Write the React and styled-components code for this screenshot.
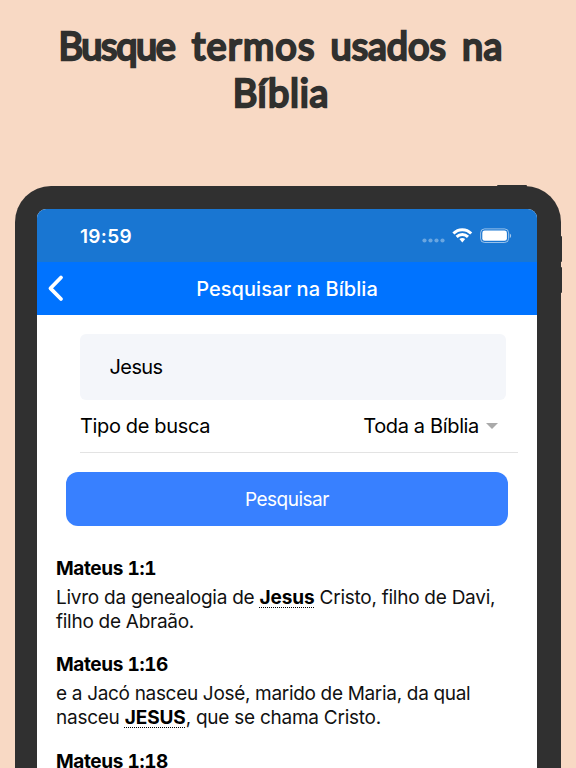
import React, {useState} from "react";
import styled, {createGlobalStyle} from "styled-components";

const GlobalStyle = createGlobalStyle`
* {
    box-sizing: border-box;
}

body {
    margin: 0;
    background: #f8d9c4;
    font-family: Inter, "Liberation Sans", sans-serif;
}
`;

const Page = styled.main`
width: 576px;
height: 768px;
overflow: hidden;
background: #f8d9c4;
`;

const Headline = styled.h1`
height: 186px;
margin: 0;
padding: 22px 15px 0 0;
font-family: Lato, sans-serif;
font-size: 38px;
font-weight: 400;
line-height: 47px;
color: #30302e;
-webkit-text-stroke: 2.4px #30302e;
`;

const HeadlineRow = styled.span`
display: flex;
justify-content: center;
gap: 16px;
`;

const Word = styled.span`
letter-spacing: ${(props) => props.$spacing}px;
margin-right: ${(props) => -props.$spacing}px;
`;

const Tablet = styled.div`
position: relative;
width: 546px;
height: 640px;
margin-left: 15px;
padding: 23px 24px 0 22px;
border-radius: 36px 36px 0 0;
background: #303030;
`;

const SideButton = styled.span`
position: absolute;
top: ${(props) => props.$top}px;
left: ${(props) => props.$left}px;
width: ${(props) => props.$width}px;
height: ${(props) => props.$height}px;
border-radius: 1px;
background: #303030;
`;

const Screen = styled.div`
height: 100%;
overflow: hidden;
border-radius: 9px 9px 0 0;
background: #fff;
`;

const StatusBar = styled.div`
display: flex;
align-items: center;
justify-content: space-between;
height: 53px;
padding: 1px 25px 0 43px;
background: #1976d2;
color: #fff;
`;

const Clock = styled.span`
font-size: 19px;
font-weight: 600;
letter-spacing: 0.3px;
`;

const NavBar = styled.header`
display: grid;
grid-template-columns: 40px 1fr 40px;
align-items: center;
height: 53px;
background: #0073ff;
color: #fff;
`;

const BackButton = styled.button`
display: flex;
padding: 0 0 2px 10px;
border: none;
background: none;
color: inherit;
cursor: pointer;
`;

const NavTitle = styled.h2`
margin: 0;
text-align: center;
font-size: 20px;
font-weight: 500;
letter-spacing: 0.06px;
`;

const SearchForm = styled.form`
padding-top: 19px;
`;

const SearchInput = styled.input`
display: block;
width: 426px;
height: 66px;
margin-left: 43px;
padding: 0 29.5px;
border: none;
border-radius: 6px;
outline: none;
background: #f4f6fa;
color: #000;
font-family: inherit;
font-size: 20px;
letter-spacing: -0.6px;
`;

const TypeRow = styled.div`
display: flex;
align-items: center;
justify-content: space-between;
height: 53px;
margin: 0 19px 0 43px;
padding-right: 20px;
border-bottom: 1px solid #e3e3e3;
font-size: 20px;
letter-spacing: -0.35px;
`;

const TypeValue = styled.span`
display: flex;
align-items: center;
gap: 7px;
`;

const Caret = styled.span`
border: 6px solid transparent;
border-top-color: #aaa;
border-bottom: none;
`;

const SubmitBtn = styled.button`
display: block;
width: 442.5px;
height: 54px;
margin: 19px 0 0 28.7px;
border: none;
border-radius: 12px;
background: #3880ff;
color: #fff;
font-family: inherit;
font-size: 19px;
letter-spacing: -0.5px;
cursor: pointer;
`;

const Results = styled.section`
padding: 30.5px 19px 0;
`;

const Verse = styled.article`
margin-bottom: 19.7px;
font-size: 19px;
line-height: 24px;
white-space: nowrap;
color: #111;
`;

const VerseRef = styled.h3`
margin: 0 0 5px;
font-size: 19px;
font-weight: 700;
font-variant-numeric: tabular-nums;
letter-spacing: -0.4px;
color: #000;
`;

const VerseLine = styled.div`
letter-spacing: ${(props) => props.$spacing}px;
`;

const Match = styled.b`
letter-spacing: -0.1px;
color: #000;
text-decoration: underline dotted 1px;
text-underline-offset: 3px;
text-decoration-skip-ink: none;
`;

function StatusIcons() {
    return(
        <svg width="90" height="18" viewBox="0 0 90 18" fill="#fff">
            <g opacity="0.35">
                <circle cx="2.5" cy="13.5" r="2.1" />
                <circle cx="8.5" cy="13.5" r="2.1" />
                <circle cx="14.5" cy="13.5" r="2.1" />
                <circle cx="20.5" cy="13.5" r="2.1" />
            </g>
            <g fill="none" stroke="#fff" strokeWidth="2.9">
                <path d="M31.4 6.5C36.3 1.4 44.3 1.4 49.2 6.5" />
                <path d="M34.6 9.9C37.8 6.7 42.8 6.7 46 9.9" />
            </g>
            <path d="M37.4 12.1C39.1 10.7 41.5 10.7 43.2 12.1L40.3 15.4Z" />
            <rect x="58.6" y="1.9" width="28" height="13.6" rx="4" fill="none" stroke="#fff" strokeOpacity="0.55" />
            <rect x="60.3" y="3.6" width="24.6" height="10.2" rx="2.4" />
            <path d="M87.8 6.4C89.6 7.2 89.6 10.2 87.8 11Z" opacity="0.6" />
        </svg>
    )
}

const headline = [
    [
        {text: "Busque", spacing: -1.4},
        {text: "termos", spacing: 1.2},
        {text: "usados", spacing: -0.1},
        {text: "na", spacing: 0.5},
    ],
    [{text: "Bíblia", spacing: 0.7}],
];

const results = [
    {
        reference: "Mateus 1:1",
        lines: [
            {spacing: -0.26, before: "Livro da genealogia de ", match: "Jesus", after: " Cristo, filho de Davi,"},
            {spacing: -0.27, before: "filho de Abraão."},
        ],
    },
    {
        reference: "Mateus 1:16",
        lines: [
            {spacing: -0.32, before: "e a Jacó nasceu José, marido de Maria, da qual"},
            {spacing: -0.25, before: "nasceu ", match: "JESUS", after: ", que se chama Cristo."},
        ],
    },
    {reference: "Mateus 1:18", lines: []},
];

export default function App() {

const [term, setTerm] = useState("Jesus");

    return(
        <Page>
            <GlobalStyle />
            <Headline>
                {headline.map((row) => (
                    <HeadlineRow key={row[0].text}>
                        {row.map((word) => (
                            <Word key={word.text} $spacing={word.spacing}>{word.text}</Word>
                        ))}
                    </HeadlineRow>
                ))}
            </Headline>
            <Tablet>
                <SideButton $top={-1} $left={482} $width={30} $height={3} />
                <SideButton $top={50} $left={544} $width={3} $height={26} />
                <SideButton $top={81} $left={544} $width={3} $height={26} />
                <Screen>
                    <StatusBar>
                        <Clock>19:59</Clock>
                        <StatusIcons />
                    </StatusBar>
                    <NavBar>
                        <BackButton aria-label="Voltar">
                            <svg width="17" height="28" viewBox="0 0 17 28" fill="none" stroke="#fff" strokeWidth="3.8" strokeLinecap="round" strokeLinejoin="round">
                                <path d="M14 3.5L3.5 14.3L14 25" />
                            </svg>
                        </BackButton>
                        <NavTitle>Pesquisar na Bíblia</NavTitle>
                    </NavBar>
                    <SearchForm onSubmit={(e) => e.preventDefault()}>
                        <SearchInput type="text" value={term} onChange={(e) => setTerm(e.target.value)} />
                        <TypeRow>
                            <span>Tipo de busca</span>
                            <TypeValue>Toda a Bíblia<Caret /></TypeValue>
                        </TypeRow>
                        <SubmitBtn type="submit">Pesquisar</SubmitBtn>
                    </SearchForm>
                    <Results>
                        {results.map((verse) => (
                            <Verse key={verse.reference}>
                                <VerseRef>{verse.reference}</VerseRef>
                                {verse.lines.map((line) => (
                                    <VerseLine key={line.before} $spacing={line.spacing}>
                                        {line.before}
                                        {line.match && <Match>{line.match}</Match>}
                                        {line.after}
                                    </VerseLine>
                                ))}
                            </Verse>
                        ))}
                    </Results>
                </Screen>
            </Tablet>
        </Page>
    )
}
